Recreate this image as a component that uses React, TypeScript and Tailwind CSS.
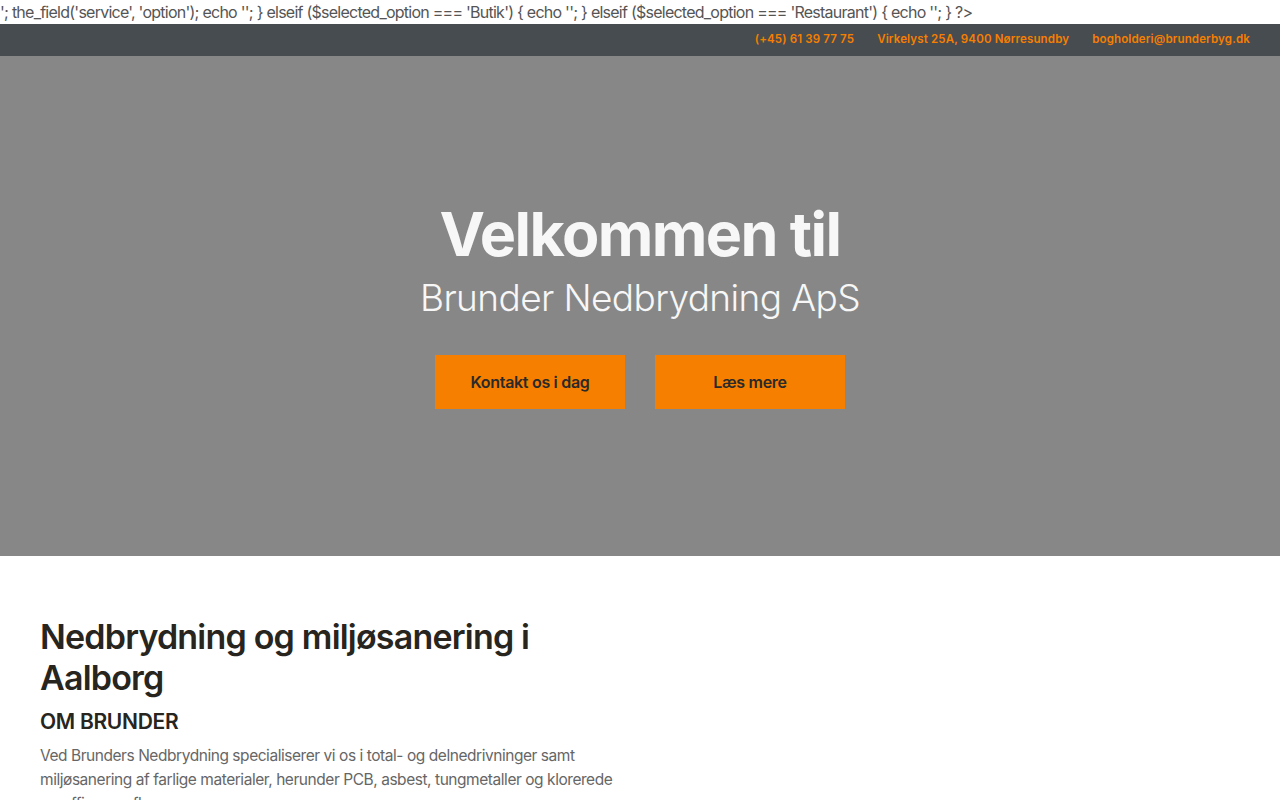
export default function App() {
  return (
    <div className="min-h-screen bg-white font-['Inter',sans-serif]">
      <p className="h-6 whitespace-nowrap text-[16px] leading-6 tracking-[-0.75px] text-[#555]">
        '; the_field('service', 'option'); echo ''; {'}'} elseif ($selected_option === 'Butik') {'{'} echo ''; {'}'} elseif
        ($selected_option === 'Restaurant') {'{'} echo ''; {'}'} ?&gt;
      </p>

      <div className="flex h-8 items-center justify-end gap-[23px] bg-[#474c50] pr-[30px] text-[11.5px] font-semibold tracking-[0.15px] text-[#f77f00]">
        <span>(+45) 61 39 77 75</span>
        <span>Virkelyst 25A, 9400 Nørresundby</span>
        <span>bogholderi@brunderbyg.dk</span>
      </div>

      <section className="flex h-[500px] flex-col items-center justify-center bg-[#878787] pb-[8px] text-[#f7f7f7]">
        <h1 className="text-[61px] font-bold leading-[76px] tracking-[-1.6px]">Velkommen til</h1>
        <h2 className="mt-[2px] text-[37px] font-light leading-[48px] tracking-[-0.6px]">Brunder Nedbrydning ApS</h2>
        <div className="mt-[33px] flex gap-[30px]">
          <button className="h-[54px] w-[190px] bg-[#f77f00] text-[16px] font-semibold tracking-[-0.3px] text-[#2a2a2a]">
            Kontakt os i dag
          </button>
          <button className="h-[54px] w-[190px] bg-[#f77f00] text-[16px] font-semibold tracking-[-0.3px] text-[#2a2a2a]">
            Læs mere
          </button>
        </div>
      </section>

      <section className="px-10 pt-[60px]">
        <div className="w-[600px]">
          <h2 className="text-[34px] font-semibold leading-[41px] tracking-[-0.8px] text-[#27251d]">
            Nedbrydning og miljøsanering i Aalborg
          </h2>
          <h3 className="mt-[10px] text-[21px] font-semibold leading-7 tracking-[-0.3px] text-[#27251d]">OM BRUNDER</h3>
          <p className="mt-[8px] w-[590px] text-[15.5px] leading-6 tracking-[-0.45px] text-[#666]">
            Ved Brunders Nedbrydning specialiserer vi os i total- og delnedrivninger samt miljøsanering af farlige
            materialer, herunder PCB, asbest, tungmetaller og klorerede paraffiner og flere.
          </p>
        </div>
      </section>
    </div>
  )
}
